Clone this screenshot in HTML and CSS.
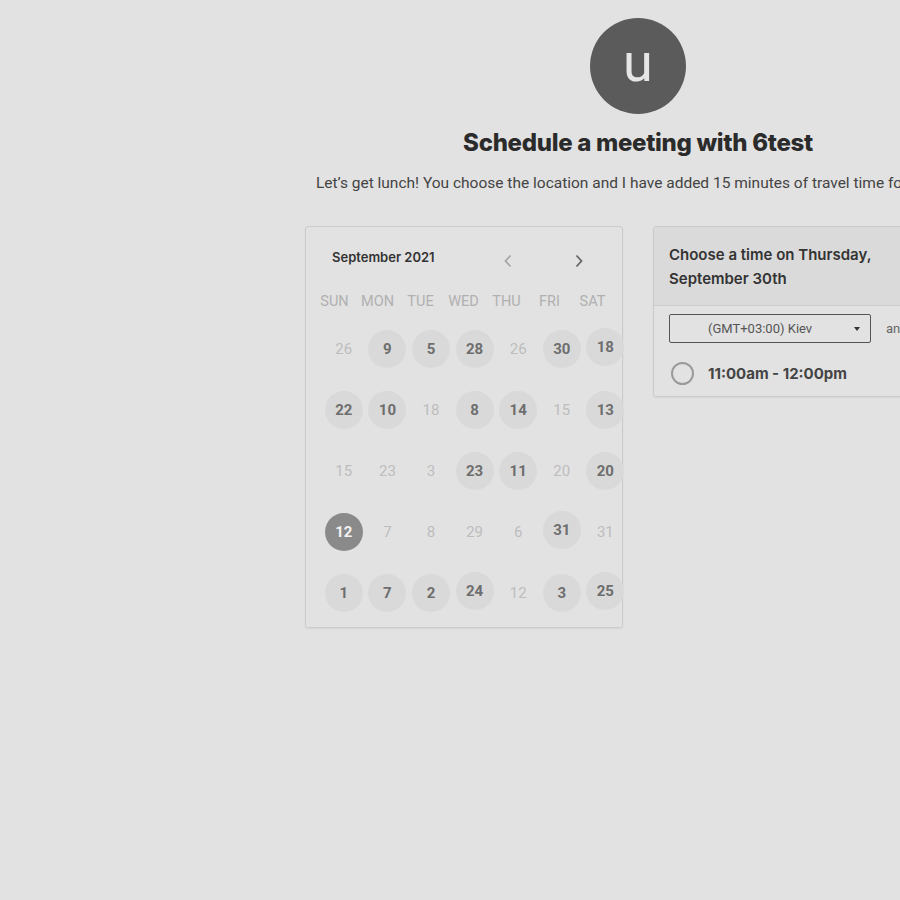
FILE: index.html
```html
<!DOCTYPE html>
<html>
<head>
<meta charset="utf-8">
<link rel="stylesheet" href="styles.css">
</head>
<body>
<div class="page">
  <div class="avatar">u</div>
  <h1 class="title">Schedule a meeting with 6test</h1>
  <p class="desc">Let’s get lunch! You choose the location and I have added 15 minutes of travel time for you.</p>
  <div class="cards">
    <div class="card cal">
      <div class="cal-head">
        <span class="month">September 2021</span>
        <span class="nav prev"><svg width="10" height="14" viewBox="0 0 10 14"><path d="M7.5 1.5 L2.5 7 L7.5 12.5" fill="none" stroke="currentColor" stroke-width="1.8"/></svg></span>
        <span class="nav next"><svg width="10" height="14" viewBox="0 0 10 14"><path d="M2.5 1.5 L7.5 7 L2.5 12.5" fill="none" stroke="currentColor" stroke-width="1.8"/></svg></span>
      </div>
      <div class="weekdays">
        <span>SUN</span><span>MON</span><span>TUE</span><span>WED</span><span>THU</span><span>FRI</span><span>SAT</span>
      </div>
      <div class="days">
        <span class="d off">26</span><span class="d on">9</span><span class="d on">5</span><span class="d on">28</span><span class="d off">26</span><span class="d on">30</span><span class="d on up">18</span>
        <span class="d on">22</span><span class="d on">10</span><span class="d off">18</span><span class="d on">8</span><span class="d on">14</span><span class="d off">15</span><span class="d on">13</span>
        <span class="d off">15</span><span class="d off">23</span><span class="d off">3</span><span class="d on">23</span><span class="d on">11</span><span class="d off">20</span><span class="d on">20</span>
        <span class="d sel">12</span><span class="d off">7</span><span class="d off">8</span><span class="d off">29</span><span class="d off">6</span><span class="d on up">31</span><span class="d off">31</span>
        <span class="d on">1</span><span class="d on">7</span><span class="d on">2</span><span class="d on up">24</span><span class="d off">12</span><span class="d on">3</span><span class="d on up">25</span>
      </div>
    </div>
    <div class="card times">
      <div class="times-head">Choose a time on Thursday,<br>September 30th</div>
      <div class="times-body">
        <div class="tz-row">
          <div class="select">(GMT+03:00) Kiev<span class="caret"></span></div>
          <span class="tz-note">and more</span>
        </div>
        <div class="slot">
          <span class="radio"></span>
          <span class="slot-text">11:00am - 12:00pm</span>
        </div>
      </div>
    </div>
  </div>
</div>
</body>
</html>
```

FILE: styles.css
```css
html, body {
  margin: 0;
  padding: 0;
  overflow: hidden;
  background: #e2e2e2;
}
body {
  width: 900px;
  height: 900px;
  font-family: Roboto, "Liberation Sans", sans-serif;
}
.page {
  width: 1276px;
  display: flex;
  flex-direction: column;
  align-items: center;
  padding-top: 18px;
}
.avatar {
  width: 96px;
  height: 96px;
  border-radius: 50%;
  background: #5b5b5b;
  color: #e6e6e6;
  font-family: Roboto, sans-serif;
  font-size: 54px;
  line-height: 90px;
  text-align: center;
}
.title {
  margin: 14px 0 0;
  font-family: Inter, sans-serif;
  font-weight: 800;
  font-size: 24px;
  line-height: 30px;
  color: #2b2b2b;
  letter-spacing: -0.3px;
}
.desc {
  margin: 15px 0 0;
  font-size: 15.5px;
  line-height: 20px;
  color: #444;
  white-space: nowrap;
  padding-right: 20px;
}
.cards {
  display: flex;
  gap: 30px;
  align-items: flex-start;
  margin-top: 33px;
}
.card {
  width: 318px;
  box-sizing: border-box;
  border: 1px solid #cbcbcb;
  border-radius: 3px;
  box-shadow: 0 1px 2px rgba(0,0,0,0.06);
}
.cal {
  height: 402px;
}
.cal-head {
  display: flex;
  align-items: center;
  height: 60px;
  padding-left: 26px;
}
.month {
  font-family: Inter, sans-serif;
  font-weight: 600;
  font-size: 13px;
  color: #333;
  width: 169px;
}
.nav {
  display: flex;
  align-items: center;
  justify-content: center;
  width: 14px;
  height: 20px;
  margin-top: 8px;
}
.prev {
  color: #a8a8a8;
}
.next {
  color: #666;
  margin-left: 57px;
}
.weekdays {
  display: grid;
  grid-template-columns: repeat(7, 43px);
  margin-left: 7px;
  height: 28px;
  align-items: center;
  font-size: 14.5px;
  color: #b0b0b0;
  text-align: center;
}
.days {
  display: grid;
  grid-template-columns: repeat(7, 43.6px);
  grid-auto-rows: 61px;
  margin-left: 16px;
  margin-top: 3px;
}
.d {
  justify-self: center;
  align-self: center;
  width: 38px;
  height: 38px;
  border-radius: 50%;
  display: flex;
  align-items: center;
  justify-content: center;
  font-size: 15px;
}
.off {
  color: #bdbdbd;
  font-weight: 400;
}
.on {
  background: #d9d9d9;
  color: #6e6e6e;
  font-weight: 700;
}
.up {
  margin-top: -3px;
}
.sel {
  background: #8a8a8a;
  color: #f2f2f2;
  font-weight: 700;
}
.times {
  overflow: hidden;
}
.times-head {
  background: #dadada;
  border-bottom: 1px solid #cbcbcb;
  padding: 16px 15px 14px;
  font-family: Inter, sans-serif;
  font-weight: 600;
  font-size: 15px;
  line-height: 24px;
  color: #333;
  height: 48px;
}
.times-body {
  padding: 8px 15px 11px;
}
.tz-row {
  display: flex;
  align-items: center;
  gap: 15px;
}
.select {
  position: relative;
  width: 202px;
  height: 29px;
  box-sizing: border-box;
  border: 1px solid #555;
  border-radius: 2px;
  font-size: 13px;
  color: #555;
  line-height: 27px;
  padding-left: 38px;
  flex-shrink: 0;
}
.caret {
  position: absolute;
  right: 10px;
  top: 12px;
  width: 0;
  height: 0;
  border-left: 3.5px solid transparent;
  border-right: 3.5px solid transparent;
  border-top: 4px solid #333;
}
.tz-note {
  font-size: 13px;
  color: #666;
  white-space: nowrap;
}
.slot {
  display: flex;
  align-items: center;
  margin-top: 18px;
  height: 24px;
}
.radio {
  width: 19px;
  height: 19px;
  border: 2px solid #9a9a9a;
  border-radius: 50%;
  margin-left: 2px;
}
.slot-text {
  margin-left: 14px;
  font-family: Inter, sans-serif;
  font-weight: 700;
  font-size: 15px;
  color: #444;
}
```
